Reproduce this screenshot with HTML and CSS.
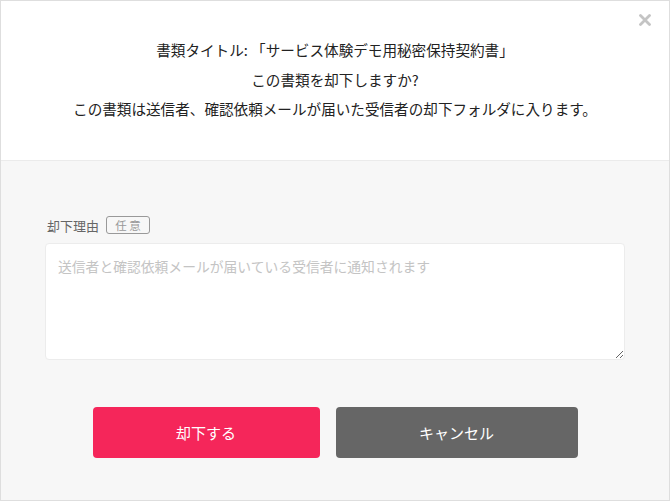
FILE: index.html
```html
<!DOCTYPE html>
<html lang="ja">
<head>
<meta charset="utf-8">
<link rel="stylesheet" href="styles.css">
</head>
<body>
<div class="modal">
  <div class="head">
    <svg class="close" width="12" height="12" viewBox="0 0 12 12" aria-label="閉じる"><path d="M1.5 1.5L10.5 10.5M10.5 1.5L1.5 10.5" stroke="#c4c4c4" stroke-width="2.8" stroke-linecap="round"/></svg>
    <p class="line">書類タイトル: 「サービス体験デモ用秘密保持契約書」</p>
    <p class="line">この書類を却下しますか?</p>
    <p class="line">この書類は送信者、確認依頼メールが届いた受信者の却下フォルダに入ります。</p>
  </div>
  <div class="body">
    <div class="label-row">
      <span class="label">却下理由</span>
      <span class="badge">任 意</span>
    </div>
    <textarea class="reason" placeholder="送信者と確認依頼メールが届いている受信者に通知されます"></textarea>
    <div class="actions">
      <button class="btn btn-reject">却下する</button>
      <button class="btn btn-cancel">キャンセル</button>
    </div>
  </div>
</div>
</body>
</html>
```
FILE: styles.css
```css
* { box-sizing: border-box; }
html, body { margin: 0; padding: 0; }
body {
  font-family: "Noto Sans CJK JP", "Noto Sans", sans-serif;
  color: #222;
}
.modal {
  width: 670px;
  height: 501px;
  border: 1px solid #dedede;
  background: #f7f7f7;
  display: flex;
  flex-direction: column;
}
.head {
  position: relative;
  background: #fff;
  height: 160px;
  border-bottom: 1px solid #ebebeb;
  padding-top: 34px;
  text-align: center;
}
.close {
  position: absolute;
  right: 18px;
  top: 13px;
}
.line {
  margin: 0;
  font-size: 14.6px;
  line-height: 29.5px;
  color: #222;
}
.body {
  padding: 55px 44px 0 46px;
}
.label-row {
  display: flex;
  align-items: center;
  height: 18px;
}
.label {
  font-size: 13px;
  color: #666;
}
.badge {
  margin-left: 7px;
  border: 1px solid #999;
  border-radius: 3px;
  font-size: 11.5px;
  color: #999;
  width: 44px;
  height: 18px;
  line-height: 16px;
  text-align: center;
}
.reason {
  display: block;
  margin-top: 9px;
  margin-left: -2px;
  width: 580px;
  height: 117px;
  border: 1px solid #ececec;
  border-radius: 4px;
  background: #fff;
  padding: 11px 12px;
  font-family: "Noto Sans CJK JP", sans-serif;
  font-size: 13.8px;
  line-height: 22px;
  resize: vertical;
  outline: none;
}
.reason::placeholder { color: #c4c4c4; }
.actions {
  display: flex;
  justify-content: center;
  gap: 16px;
  margin-top: 47px;
  margin-left: -2px;
}
.btn {
  height: 51px;
  border: none;
  border-radius: 4px;
  color: #fff;
  font-family: "Noto Sans CJK JP", sans-serif;
  font-size: 15px;
  cursor: pointer;
}
.btn-reject { width: 227px; background: #f5265a; }
.btn-cancel { width: 242px; background: #666; }
```
